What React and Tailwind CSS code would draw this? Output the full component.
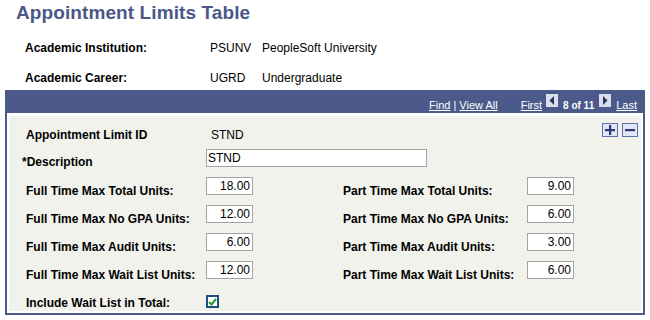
import { useState } from "react"

const font = { fontFamily: '"Liberation Sans", Arial, sans-serif' }

const fullTime = [
  { label: "Full Time Max Total Units:", value: "18.00" },
  { label: "Full Time Max No GPA Units:", value: "12.00" },
  { label: "Full Time Max Audit Units:", value: "6.00" },
  { label: "Full Time Max Wait List Units:", value: "12.00" },
]

const partTime = [
  { label: "Part Time Max Total Units:", value: "9.00" },
  { label: "Part Time Max No GPA Units:", value: "6.00" },
  { label: "Part Time Max Audit Units:", value: "3.00" },
  { label: "Part Time Max Wait List Units:", value: "6.00" },
]

function UnitsBox({ value }) {
  return (
    <div className="w-[47px] h-[18px] border border-[#a3a3a3] bg-white text-right pr-[2px] text-[12px] leading-[16px] text-black">
      {value}
    </div>
  )
}

function NavArrow({ dir }) {
  return (
    <div className="mt-[2px] w-[12px] h-[13px] bg-[#d9ddec] flex items-center justify-center">
      <svg width="6" height="9" viewBox="0 0 6 9">
        {dir === "left" ? (
          <polygon points="5,0 5,9 0.5,4.5" fill="#29345f" />
        ) : (
          <polygon points="1,0 1,9 5.5,4.5" fill="#29345f" />
        )}
      </svg>
    </div>
  )
}

export default function App() {
  const [includeWait, setIncludeWait] = useState(true)

  return (
    <div className="w-[650px] h-[320px] bg-white text-black overflow-hidden" style={font}>
      <h1 className="ml-[16px] mt-[2px] text-[19px] leading-[22px] font-bold tracking-[0.1px] text-[#4b5788]">
        Appointment Limits Table
      </h1>

      <div className="mt-[17px] flex text-[12px] leading-[14px] pl-[25px]">
        <span className="w-[185px] font-bold">Academic Institution:</span>
        <span className="w-[52px]">PSUNV</span>
        <span>PeopleSoft University</span>
      </div>
      <div className="mt-[16px] flex text-[12px] leading-[14px] pl-[25px]">
        <span className="w-[185px] font-bold">Academic Career:</span>
        <span className="w-[52px]">UGRD</span>
        <span>Undergraduate</span>
      </div>

      <div className="mt-[5px] ml-[5px] w-[640px] border-2 border-[#4b5a8b] bg-white">
        <div className="h-[21px] bg-[#4b5a8b] flex items-start justify-end pr-[6px] text-white text-[11px] leading-[13px]">
          <span className="mt-[7px] underline">Find</span>
          <span className="mt-[7px] mx-[3px]">|</span>
          <span className="mt-[7px] underline">View All</span>
          <span className="mt-[7px] ml-[23px] mr-[4px] underline">First</span>
          <NavArrow dir="left" />
          <span className="mt-[7px] mx-[5px] font-bold text-[10px]">8 of 11</span>
          <NavArrow dir="right" />
          <span className="mt-[7px] ml-[5px] underline">Last</span>
        </div>

        <div className="px-[2px] pt-[3px] pb-[2px]">
          <div className="bg-[#f1f2ec] pt-[7px] text-[12px] leading-[14px]">
            <div className="flex items-start h-[19px]">
              <span className="ml-[17px] mt-[5px] w-[185px] font-bold">Appointment Limit ID</span>
              <span className="mt-[5px]">STND</span>
              <div className="ml-auto mr-[3px] flex gap-[4px]">
                <button className="w-[16px] h-[14px] border border-[#5f6fa8] bg-[#e1e6f6] flex items-center justify-center">
                  <svg width="10" height="10" viewBox="0 0 10 10">
                    <rect x="4" y="0" width="2.2" height="10" fill="#2c3a7a" />
                    <rect x="0" y="4" width="10" height="2.2" fill="#2c3a7a" />
                  </svg>
                </button>
                <button className="w-[16px] h-[14px] border border-[#5f6fa8] bg-[#e1e6f6] flex items-center justify-center">
                  <svg width="10" height="10" viewBox="0 0 10 10">
                    <rect x="0" y="4" width="10" height="2.2" fill="#2c3a7a" />
                  </svg>
                </button>
              </div>
            </div>

            <div className="mt-[7px] flex items-start h-[20px]">
              <span className="ml-[13px] mt-[6px] w-[184px] font-bold">*Description</span>
              <div className="w-[221px] h-[18px] border border-[#a3a3a3] bg-white pl-[1px] leading-[16px]">STND</div>
            </div>

            <div className="mt-[8px]">
              {fullTime.map((row, i) => (
                <div key={row.label} className="flex items-start h-[28px]">
                  <span className="ml-[17px] mt-[7px] w-[180px] font-bold">{row.label}</span>
                  <UnitsBox value={row.value} />
                  <span className="ml-[90px] mt-[7px] w-[184px] font-bold">{partTime[i].label}</span>
                  <UnitsBox value={partTime[i].value} />
                </div>
              ))}
              <div className="flex items-start h-[22px]">
                <span className="ml-[17px] mt-[7px] w-[180px] font-bold">Include Wait List in Total:</span>
                <button
                  onClick={() => setIncludeWait(!includeWait)}
                  className="mt-[6px] w-[13px] h-[13px] border-2 border-[#1e4f80] bg-white flex items-center justify-center"
                >
                  {includeWait && (
                    <svg width="9" height="8" viewBox="0 0 9 8">
                      <path d="M1 4 L3.5 6.5 L8 1" stroke="#22a022" strokeWidth="2" fill="none" />
                    </svg>
                  )}
                </button>
              </div>
            </div>
          </div>
        </div>
      </div>
    </div>
  )
}
